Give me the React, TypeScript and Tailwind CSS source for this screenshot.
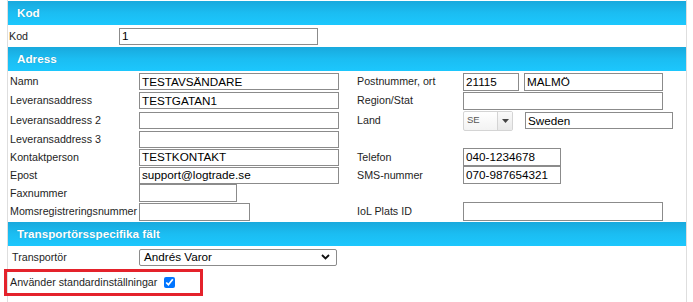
const font = { fontFamily: '"Liberation Sans", Arial, sans-serif' };

const Header = ({ title }: { title: string }) => (
  <div className="h-[24px] flex items-center pl-[9px] bg-gradient-to-b from-[#19a9dd] via-[#1bbdf2] to-[#1cc7fd]">
    <span className="text-white font-bold text-[11.7px] [text-shadow:0_0_1px_rgba(0,60,90,0.35)]">{title}</span>
  </div>
);

const Label = ({ children }: { children?: React.ReactNode }) => (
  <div className="flex items-center text-[10.7px] text-[#1e1e1e] whitespace-nowrap">{children}</div>
);

const Field = ({ value = '', w, h = 'h-[17px]' }: { value?: string; w: string; h?: string }) => (
  <div className={`${w} ${h} border border-[#8b8b8b] bg-white flex items-center pl-[2px] text-[11.7px] text-black leading-none overflow-hidden whitespace-nowrap`}>
    {value}
  </div>
);

const Cell = ({ children }: { children?: React.ReactNode }) => (
  <div className="flex items-center">{children}</div>
);

export default function App() {
  return (
    <div className="w-[693px] h-[302px] bg-white overflow-hidden" style={font}>
      <div className="ml-[7px] w-[680px] h-[302px] border-l border-r border-[#dedede] pt-[1px]">
        <Header title="Kod" />
        <div className="h-[22px] flex items-center">
          <div className="w-[111px] pl-[1px]">
            <Label>Kod</Label>
          </div>
          <Field value="1" w="w-[199px]" />
        </div>

        <Header title="Adress" />
        <div className="mt-[1px] grid grid-cols-[131px_218px_106px_1fr] grid-rows-[19px_19px_21px_17px_18px_18px_18px_19px]">
          <div className="pl-[2px] flex"><Label>Namn</Label></div>
          <Cell><Field value="TESTAVSÄNDARE" w="w-[200px]" /></Cell>
          <Label>Postnummer, ort</Label>
          <Cell>
            <div className="flex gap-[5px]">
              <Field value="21115" w="w-[56px]" h="h-[18px]" />
              <Field value="MALMÖ" w="w-[139px]" h="h-[18px]" />
            </div>
          </Cell>

          <div className="pl-[2px] flex"><Label>Leveransaddress</Label></div>
          <Cell><Field value="TESTGATAN1" w="w-[200px]" /></Cell>
          <Label>Region/Stat</Label>
          <Cell><Field w="w-[200px]" h="h-[18px]" /></Cell>

          <div className="pl-[2px] flex"><Label>Leveransaddress 2</Label></div>
          <Cell><Field w="w-[200px]" /></Cell>
          <Label>Land</Label>
          <Cell>
            <div className="flex items-center gap-[12px]">
              <div className="w-[50px] h-[20px] flex border border-[#d4d4d4] rounded-[2px] bg-gradient-to-b from-white to-[#f3f3f3]">
                <div className="flex-1 flex items-center pl-[3px] text-[9.5px] text-[#555]">SE</div>
                <div className="w-[15px] border-l border-[#d4d4d4] flex items-center justify-center bg-gradient-to-b from-[#fafafa] to-[#e9e9e9]">
                  <svg width="7" height="4" viewBox="0 0 7 4"><path d="M0 0h7L3.5 4z" fill="#444" /></svg>
                </div>
              </div>
              <Field value="Sweden" w="w-[148px]" />
            </div>
          </Cell>

          <div className="pl-[2px] flex"><Label>Leveransaddress 3</Label></div>
          <Cell><Field w="w-[200px]" /></Cell>
          <div />
          <div />

          <div className="pl-[2px] flex"><Label>Kontaktperson</Label></div>
          <Cell><Field value="TESTKONTAKT" w="w-[200px]" /></Cell>
          <Label>Telefon</Label>
          <Cell><Field value="040-1234678" w="w-[98px]" h="h-[18px]" /></Cell>

          <div className="pl-[2px] flex"><Label>Epost</Label></div>
          <Cell><Field value="support@logtrade.se" w="w-[200px]" /></Cell>
          <Label>SMS-nummer</Label>
          <Cell><Field value="070-987654321" w="w-[98px]" h="h-[18px]" /></Cell>

          <div className="pl-[2px] flex"><Label>Faxnummer</Label></div>
          <Cell><Field w="w-[98px]" h="h-[18px]" /></Cell>
          <div />
          <div />

          <div className="pl-[2px] flex"><Label>Momsregistreringsnummer</Label></div>
          <Cell><Field w="w-[111px]" h="h-[18px]" /></Cell>
          <Label>IoL Plats ID</Label>
          <Cell><Field w="w-[200px]" h="h-[19px]" /></Cell>
        </div>

        <div className="mt-[1px]">
          <Header title="Transportörsspecifika fält" />
        </div>
        <div className="h-[22px] flex items-center">
          <div className="w-[131px] pl-[4px]">
            <Label>Transportör</Label>
          </div>
          <div className="w-[198px] h-[17px] border border-[#8b8b8b] rounded-[2px] bg-white flex items-center justify-between pl-[4px] pr-[6px]">
            <span className="text-[11.7px] text-black leading-none">Andrés Varor</span>
            <svg width="9" height="6" viewBox="0 0 9 6"><path d="M1 1l3.5 3.5L8 1" fill="none" stroke="#111" strokeWidth="1.8" /></svg>
          </div>
        </div>

        <div className="relative h-[28px] flex items-center pl-[2px]">
          <div className="absolute left-[-4px] top-[1px] w-[199px] h-[27px] border-[3px] border-[#e4222b] pointer-events-none" />
          <Label>Använder standardinställningar</Label>
          <input type="checkbox" checked readOnly className="ml-[7px] w-[11px] h-[11px] accent-[#0075ff]" />
        </div>
      </div>
    </div>
  );
}
